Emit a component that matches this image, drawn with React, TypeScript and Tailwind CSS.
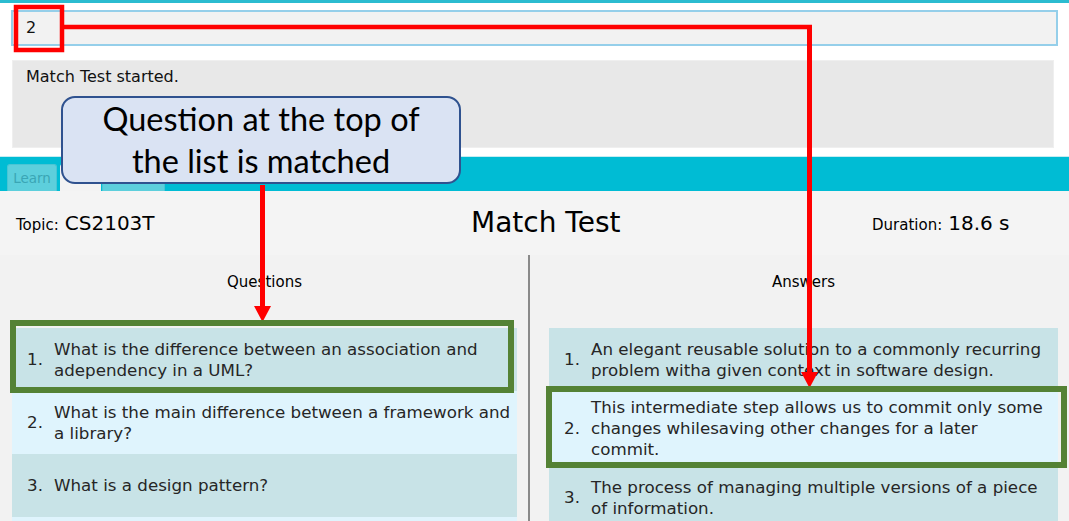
import React from "react";

const questions = [
  "What is the difference between an association and adependency in a UML?",
  "What is the main difference between a framework and a library?",
  "What is a design pattern?",
];

const answers = [
  "An elegant reusable solution to a commonly recurring problem witha given context in software design.",
  "This intermediate step allows us to commit only some changes whilesaving other changes for a later commit.",
  "The process of managing multiple versions of a piece of information.",
];

function Item({ n, text, pr }: { n: number; text: string; pr: string }) {
  const bg = n % 2 === 1 ? "bg-[#c8e3e7]" : "bg-[#dff4fd]";
  return (
    <div className={`flex items-center min-h-[63px] py-[6px] pl-[15px] ${pr} ${bg}`}>
      <span className="w-[27px] shrink-0 text-[16.7px] leading-[21px] text-[#262626]">{n}.</span>
      <span className="text-[16.7px] leading-[21px] text-[#262626]">{text}</span>
    </div>
  );
}

export default function App() {
  return (
    <div
      className="relative w-[1069px] h-[521px] overflow-hidden bg-white"
      style={{ fontFamily: '"DejaVu Sans", sans-serif' }}
    >
      <div className="h-[3px] bg-[#2bbcd0]" />
      {/* command box */}
      <div className="mt-[7px] ml-[11px] w-[1047px] h-[36px] border-2 border-[#95cfea] bg-[#f2f2f2] pl-[13px] flex items-center text-[16px] text-[#111]">
        2
      </div>
      {/* result box */}
      <div className="mt-[14px] ml-[12px] w-[1042px] h-[88px] bg-[#e8e8e8] border border-[#efefef] pl-[13px] pt-[6px] text-[16px] leading-[19px] text-[#111]">
        Match Test started.
      </div>
      {/* tab bar */}
      <div className="mt-[8px] h-[1px] bg-[#c6ecf2]" />
      <div className="h-[34px] bg-[#00bcd4] flex items-end">
        <div className="ml-[7px] w-[50px] h-[27px] rounded-t-[3px] bg-[#5dcfdc] border border-b-0 border-[#4ac5d4] flex items-center justify-center text-[13.5px] text-[#3aa6b5]">
          Learn
        </div>
        <div className="ml-[3px] w-[41px] h-[27px] rounded-t-[3px] bg-[#f3f3f3]" />
        <div className="ml-[1px] w-[63px] h-[26px] rounded-t-[3px] bg-[#5dcfdc] border border-b-0 border-[#4ac5d4]" />
      </div>
      {/* header */}
      <div className="h-[64px] bg-[#f4f4f4] grid grid-cols-[471px_401px_1fr] items-center text-black">
        <div className="pl-[16px] flex items-baseline">
          <span className="text-[15px]">Topic:</span>
          <span className="ml-[6px] text-[20px]">CS2103T</span>
        </div>
        <div className="text-[28px]">Match Test</div>
        <div className="flex items-baseline">
          <span className="text-[15px]">Duration:</span>
          <span className="ml-[6px] text-[20px]">18.6 s</span>
        </div>
      </div>
      {/* body */}
      <div className="flex h-[300px] bg-[#f2f2f2]">
        <div className="w-[528px] pl-[12px] pr-[11px]">
          <div className="h-[73px] pt-[18px] text-center text-[15px] leading-[18px] text-black">Questions</div>
          <div className="flex flex-col">
            {questions.map((q, i) => (
              <Item key={i} n={i + 1} text={q} pr="pr-[2px]" />
            ))}
            <div className="h-[12px] bg-[#dff4fd]" />
          </div>
        </div>
        <div className="w-[2px] bg-[#8a8a8a]" />
        <div className="flex-1 pl-[19px] pr-[11px]">
          <div className="h-[73px] pt-[18px] text-center text-[15px] leading-[18px] text-black">Answers</div>
          <div className="flex flex-col">
            {answers.map((a, i) => (
              <Item key={i} n={i + 1} text={a} pr="pr-[10px]" />
            ))}
          </div>
        </div>
      </div>

      {/* callout */}
      <div
        className="absolute left-[61px] top-[96px] w-[400px] h-[88px] rounded-[14px] border-2 border-[#2f528f] bg-[#dae3f3] flex flex-col items-center justify-center text-[32.5px] leading-[42px] text-black"
        style={{ fontFamily: 'Lato, "Noto Sans", sans-serif' }}
      >
        <span>Question at the top of</span>
        <span>the list is matched</span>
      </div>

      {/* annotation overlay */}
      <svg className="absolute left-0 top-0 pointer-events-none" width="1069" height="521" viewBox="0 0 1069 521">
        <rect x="16" y="7" width="46" height="43" fill="none" stroke="#ff0000" strokeWidth="4.5" />
        <line x1="62" y1="27" x2="812" y2="27" stroke="#ff0000" strokeWidth="4.5" />
        <line x1="809.5" y1="25" x2="809.5" y2="374" stroke="#ff0000" strokeWidth="5" />
        <polygon points="801,372 818,372 809.5,388" fill="#ff0000" />
        <line x1="262.5" y1="185" x2="262.5" y2="308" stroke="#ff0000" strokeWidth="5" />
        <polygon points="254,306 271,306 262.5,322" fill="#ff0000" />
        <rect x="13" y="323" width="498" height="67" fill="none" stroke="#548235" strokeWidth="6" />
        <rect x="549" y="389" width="515" height="76" fill="none" stroke="#548235" strokeWidth="6" />
      </svg>
    </div>
  );
}
